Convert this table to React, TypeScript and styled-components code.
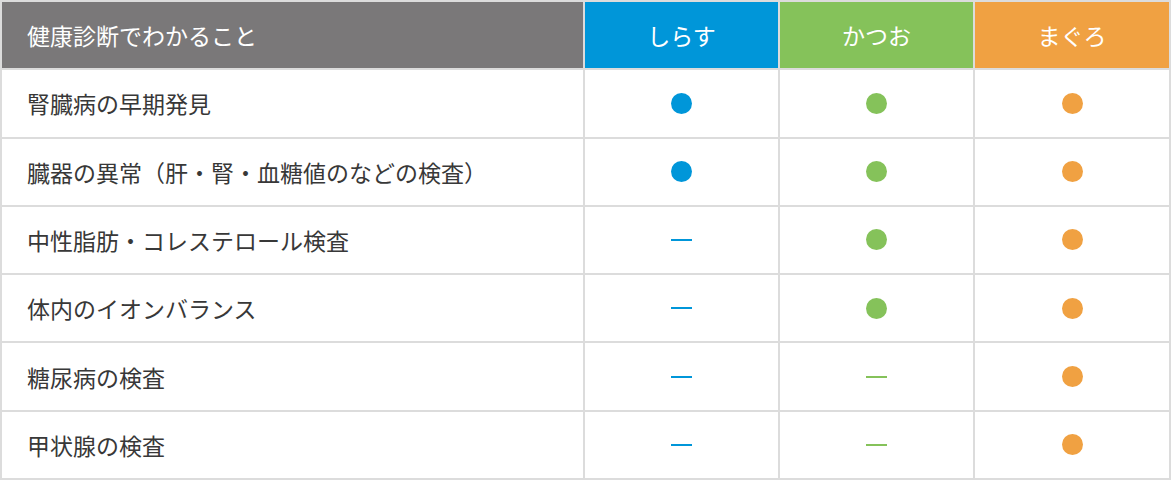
import styled, { createGlobalStyle } from 'styled-components';

const GlobalStyle = createGlobalStyle`
  html, body {
    margin: 0;
    padding: 0;
    background: #fff;
  }
  body {
    font-family: "Noto Sans CJK JP", "Noto Sans", sans-serif;
  }
`;

const colors = {
  gray: '#7a7879',
  shirasu: '#0096d9',
  katsuo: '#85c25a',
  maguro: '#f0a142',
};

type Kind = 'shirasu' | 'katsuo' | 'maguro';

const Table = styled.div`
  display: grid;
  grid-template-columns: 581px 193px 193px 1fr;
  grid-template-rows: repeat(7, 1fr);
  gap: 2px;
  padding: 2px;
  width: 1171px;
  height: 480px;
  box-sizing: border-box;
  background: #dcdcdc;
`;

const HeadCell = styled.div<{ $bg: string; $left?: boolean }>`
  display: flex;
  align-items: center;
  justify-content: ${(p) => (p.$left ? 'flex-start' : 'center')};
  padding-left: ${(p) => (p.$left ? '25px' : '0')};
  background: ${(p) => p.$bg};
  color: #fff;
  font-size: 23px;
`;

const LabelCell = styled.div`
  display: flex;
  align-items: center;
  padding-left: 25px;
  background: #fff;
  color: #383838;
  font-size: 23px;
`;

const MarkCell = styled.div`
  display: flex;
  align-items: center;
  justify-content: center;
  background: #fff;
`;

const Dot = styled.span<{ $color: string }>`
  display: block;
  width: 21px;
  height: 21px;
  border-radius: 50%;
  background: ${(p) => p.$color};
`;

const Dash = styled.span<{ $color: string }>`
  display: block;
  width: 21px;
  height: 2px;
  background: ${(p) => p.$color};
`;

const rows: { label: string; marks: [boolean, boolean, boolean] }[] = [
  { label: '腎臓病の早期発見', marks: [true, true, true] },
  { label: '臓器の異常（肝・腎・血糖値のなどの検査）', marks: [true, true, true] },
  { label: '中性脂肪・コレステロール検査', marks: [false, true, true] },
  { label: '体内のイオンバランス', marks: [false, true, true] },
  { label: '糖尿病の検査', marks: [false, false, true] },
  { label: '甲状腺の検査', marks: [false, false, true] },
];

const kinds: Kind[] = ['shirasu', 'katsuo', 'maguro'];

const Mark = ({ on, kind }: { on: boolean; kind: Kind }) => (
  <MarkCell>{on ? <Dot $color={colors[kind]} /> : <Dash $color={colors[kind]} />}</MarkCell>
);

export default () => {
  return (
    <>
      <GlobalStyle />
      <Table>
        <HeadCell $bg={colors.gray} $left>
          健康診断でわかること
        </HeadCell>
        <HeadCell $bg={colors.shirasu}>しらす</HeadCell>
        <HeadCell $bg={colors.katsuo}>かつお</HeadCell>
        <HeadCell $bg={colors.maguro}>まぐろ</HeadCell>
        {rows.map((row) => [
          <LabelCell key={row.label}>{row.label}</LabelCell>,
          ...kinds.map((k, i) => <Mark key={row.label + k} on={row.marks[i]} kind={k} />),
        ])}
      </Table>
    </>
  );
};
